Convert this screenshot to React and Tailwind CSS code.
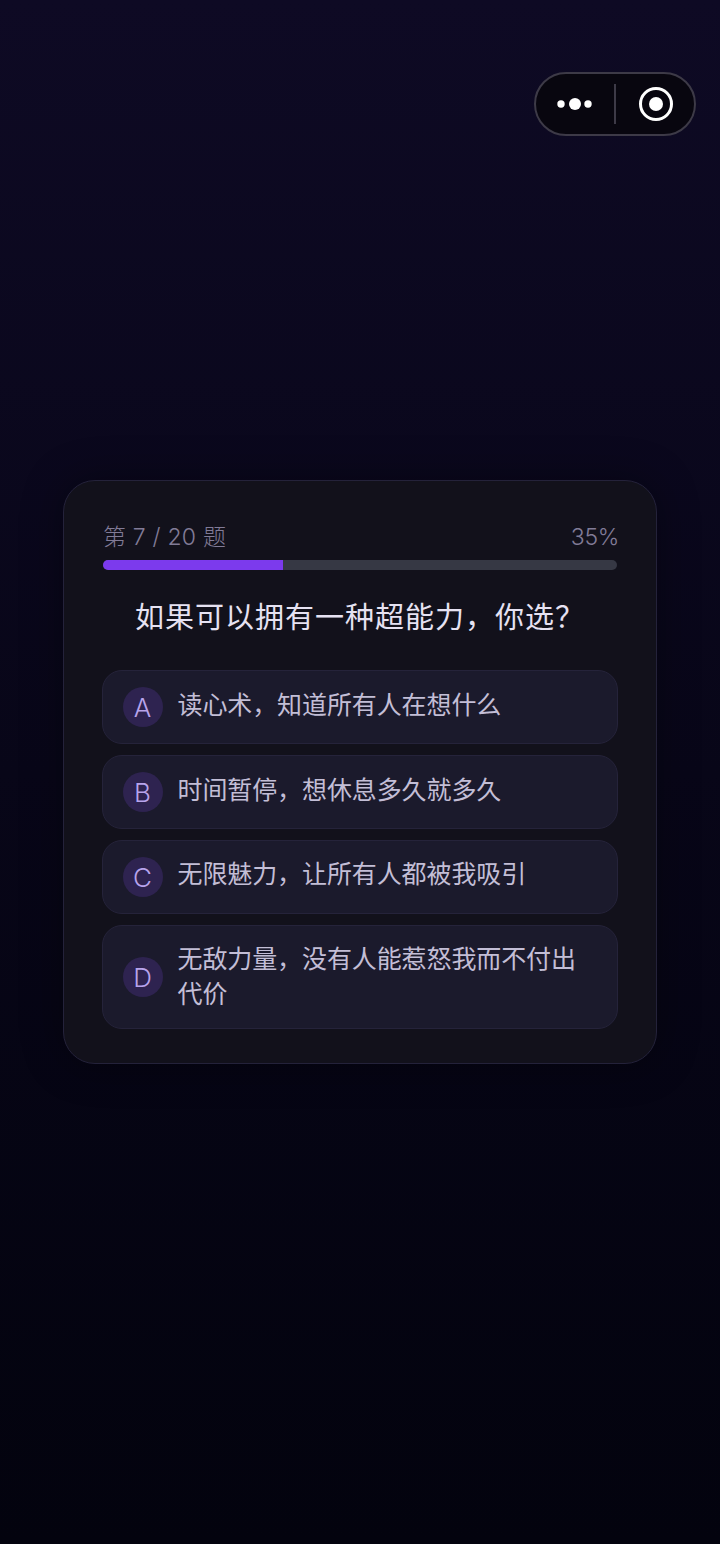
const options = [
  { key: "A", text: "读心术\uFF0C知道所有人在想什么", lift: "mb-[4px]" },
  { key: "B", text: "时间暂停\uFF0C想休息多久就多久", lift: "mb-[4px]" },
  { key: "C", text: "无限魅力\uFF0C让所有人都被我吸引", lift: "mb-[5px]" },
  { key: "D", text: "无敌力量\uFF0C没有人能惹怒我而不付出代价", lift: "mb-0" },
];

const font = "font-['Inter','Noto_Sans_CJK_SC',sans-serif]";

function Capsule() {
  return (
    <div className="absolute left-[534px] top-[72px] flex h-[64px] w-[162px] items-center rounded-[32px] border-2 border-[#3d3a47] bg-[#08060f]">
      <div className="flex w-[78px] items-center justify-center">
        <svg width="36" height="14" viewBox="0 0 36 14" fill="#fff">
          <circle cx="4" cy="7" r="3.7" />
          <circle cx="18" cy="7" r="6" />
          <circle cx="31" cy="7" r="3.7" />
        </svg>
      </div>
      <div className="h-[40px] w-[2px] bg-[#3d3a47]" />
      <div className="flex flex-1 items-center justify-center pl-[2px]">
        <svg width="36" height="36" viewBox="0 0 36 36">
          <circle cx="18" cy="18" r="15.5" fill="none" stroke="#fff" strokeWidth="3" />
          <circle cx="18" cy="18" r="7" fill="#fff" />
        </svg>
      </div>
    </div>
  );
}

function Option({ k, text, lift }) {
  return (
    <div className="-mx-[1px] flex items-center gap-[15px] rounded-[20px] border border-[#25233a] bg-[#1b1a2c] py-[16px] pl-[20px] pr-[30px]">
      <div className="flex h-[40px] w-[40px] shrink-0 items-center justify-center rounded-full bg-[#2e2350] pr-[1px] text-[26px] font-light text-[#b8a4ec]">
        {k}
      </div>
      <div className={`${lift} -ml-[0.5px] text-[25px] leading-[35px] tracking-[-0.1px] text-[#c3bed6]`}>{text}</div>
    </div>
  );
}

export default function App() {
  return (
    <div className={`${font} relative flex h-[1544px] w-[720px] items-center justify-center bg-gradient-to-b from-[#0e0a24] via-[#080618] to-[#03030e]`}>
      <Capsule />
      <div className="h-[584px] w-[594px] rounded-[32px] border border-[#24223a] bg-[#12111b] px-[39px] pt-[38px] shadow-[0_0_40px_rgba(0,0,0,0.35)]">
        <div className="flex items-center justify-between text-[#817b97]">
          <span className="text-[23px] leading-[36px] tracking-[0.2px] font-light">第 7 / 20 题</span>
          <span className="-mr-[2px] text-[23px] leading-[36px] tracking-[-0.3px] font-light">35%</span>
        </div>
        <div className="mt-[5px] h-[10px] overflow-hidden rounded-full bg-[#363844]">
          <div className="h-full w-[35%] bg-[#7c3aed]" />
        </div>
        <div className="mt-[29px] text-center text-[29px] leading-[38px] tracking-[1px] text-[#e6e2f2]">
          {"如果可以拥有一种超能力\uFF0C你选\uFF1F"}
        </div>
        <div className="mt-[33px] flex flex-col gap-[11px]">
          {options.map((o) => (
            <Option key={o.key} k={o.key} text={o.text} lift={o.lift} />
          ))}
        </div>
      </div>
    </div>
  );
}
